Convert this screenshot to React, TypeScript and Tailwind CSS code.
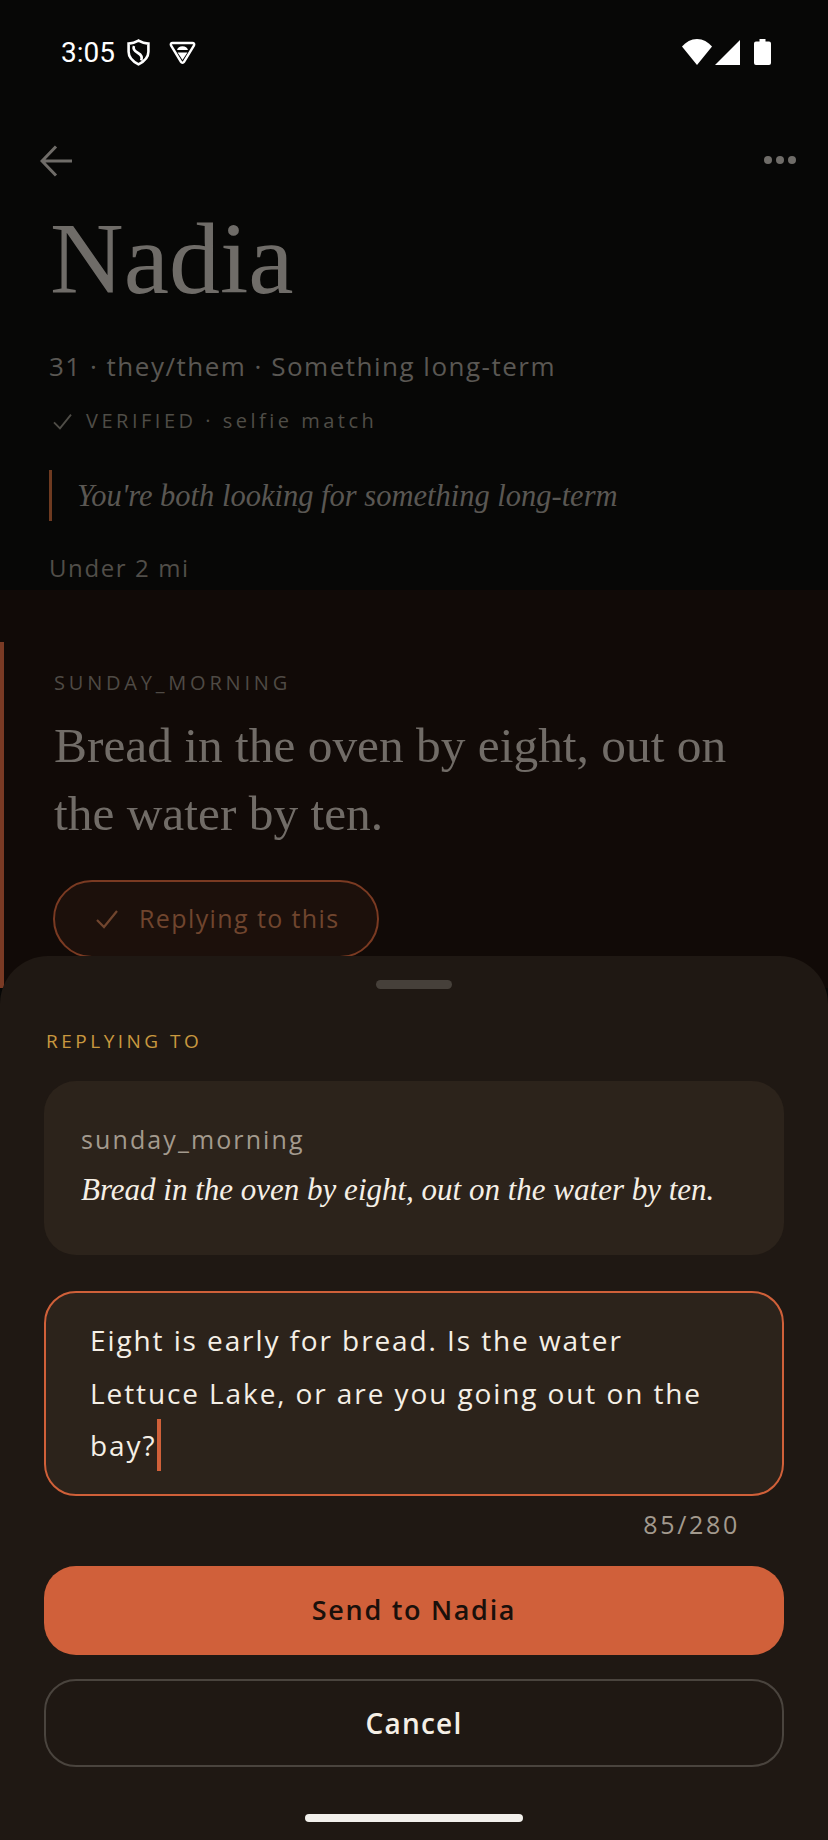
const sans = "font-['Open_Sans',sans-serif]";
const serif = "font-['Liberation_Serif',serif]";

function CheckMark({ className }: { className: string }) {
  return (
    <svg viewBox="0 0 24 20" fill="none" stroke="currentColor" strokeWidth="2.2" className={className}>
      <path d="M2 11l7 7L22 2" />
    </svg>
  );
}

function StatusBar() {
  return (
    <div className="flex h-[104px] items-center justify-between pl-[61px] pr-[57px] text-white">
      <div className="flex items-center">
        <span className="mt-[2px] font-['Roboto',sans-serif] text-[28px] leading-none">3:05</span>
        <svg viewBox="0 0 23 27" fill="none" stroke="currentColor" strokeWidth="2.6" className="ml-[12px] h-[27px] w-[23px]">
          <path d="M11.5 1.6C8 3.6 5 4.4 1.6 4.6v8.2c0 5.6 4 9.6 9.9 12.6 5.9-3 9.9-7 9.9-12.6V4.6C18 4.4 15 3.6 11.5 1.6z" />
          <path d="M7 7c-1.4 3 .4 5 4 7 3.2 1.8 4.6 4 3.2 7.4" />
        </svg>
        <svg viewBox="0 0 27 23" className="ml-[19px] h-[23px] w-[27px]">
          <path d="M3.5 2h20c1.4 0 2.1 1.2 1.5 2.4l-10 16.4c-.7 1.2-2.3 1.2-3 0L2 4.4C1.4 3.2 2.1 2 3.5 2z" fill="none" stroke="currentColor" strokeWidth="2.4" />
          <path d="M8 9c.6-2.4 2.6-3.8 5.5-3.8S18.400 6.600 19 9z" fill="currentColor" />
          <path d="M8.600 11.500h9.800l-4.900 7.600z" fill="currentColor" />
        </svg>
      </div>
      <div className="flex items-center">
        <svg viewBox="0 0 30 26" className="h-[26px] w-[30px]">
          <path d="M0 7.500C4 3 9 0 15 0s11 3 15 7.500L15 26z" fill="currentColor" />
        </svg>
        <svg viewBox="0 0 25 25" className="ml-[3px] h-[25px] w-[25px]">
          <path d="M25 0v25H0z" fill="currentColor" />
        </svg>
        <svg viewBox="0 0 17 26" className="ml-[14px] h-[26px] w-[17px]">
          <path d="M5.500 0h6v2.500H15a2 2 0 0 1 2 2V24a2 2 0 0 1-2 2H2a2 2 0 0 1-2-2V4.500a2 2 0 0 1 2-2h3.500z" fill="currentColor" />
        </svg>
      </div>
    </div>
  );
}

function ProfileHeader() {
  return (
    <div className="h-[486px] px-[49px]">
      <div className="-ml-[9px] -mr-[17px] flex h-[103px] items-start justify-between pt-[41px] text-[#6f6c68]">
        <svg viewBox="0 0 32 32" fill="none" stroke="currentColor" strokeWidth="3" className="h-[32px] w-[32px]">
          <path d="M32 16H3M16 1.500L2 16l14 14.500" />
        </svg>
        <div className="mt-[11px] flex gap-[4px]">
          <span className="h-[8px] w-[8px] rounded-full bg-[#6f6c68]" />
          <span className="h-[8px] w-[8px] rounded-full bg-[#6f6c68]" />
          <span className="h-[8px] w-[8px] rounded-full bg-[#6f6c68]" />
        </div>
      </div>
      <h1 className={`${serif} pl-[1px] text-[102px] leading-[104px] text-[#6f6c68]`}>Nadia</h1>
      <p className={`${sans} mt-[38px] text-[26px] leading-[34px] tracking-[1.5px] text-[#5a5753]`}>
        31 · they/them · Something long-term
      </p>
      <div className={`${sans} mt-[25px] flex items-center text-[20px] leading-[26px] tracking-[3.5px] text-[#4f4d47]`}>
        <CheckMark className="ml-[3px] h-[17px] w-[21px]" />
        <span className="ml-[13px]">VERIFIED · selfie match</span>
      </div>
      <div className="mt-[36px] flex h-[51px] items-center border-l-[3px] border-[#6e3a20] pl-[25px]">
        <p className={`${serif} text-[30.5px] italic leading-[40px] text-[#5a5753]`}>
          You're both looking for something long-term
        </p>
      </div>
      <p className={`${sans} mt-[31px] text-[24px] leading-[32px] tracking-[1.6px] text-[#514e49]`}>Under 2 mi</p>
    </div>
  );
}

function PromptCard() {
  return (
    <div className="bg-[#110a07] pt-[52px]">
      <div className="h-[346px] border-l-[4px] border-[#7a3a24] pl-[50px] pt-[28px]">
        <p className={`${sans} text-[20px] leading-[26px] tracking-[3.8px] text-[#4f4a45]`}>SUNDAY_MORNING</p>
        <p className={`${serif} mt-[16px] text-[49.4px] leading-[68px] text-[#716c67]`}>
          Bread in the oven by eight, out on
          <br />
          the water by ten.
        </p>
        <div className="-ml-[1px] mt-[32px] flex h-[78px] w-[326px] items-center rounded-full border-2 border-[#7a3a22] bg-[#1c100b] pl-[40px] text-[#70452e]">
          <CheckMark className="h-[20px] w-[24px]" />
          <span className={`${sans} ml-[20px] text-[25px] tracking-[1.4px]`}>Replying to this</span>
        </div>
      </div>
    </div>
  );
}

function ReplySheet() {
  return (
    <div className="absolute inset-x-0 bottom-0 h-[884px] rounded-t-[48px] bg-[#1f1813] px-[44px]">
      <div className="mx-auto mt-[24px] h-[9px] w-[76px] rounded-full bg-[#46403a]" />
      <p className={`${sans} mt-[39px] pl-[2px] text-[19px] leading-[26px] tracking-[3.5px] text-[#c9983f]`}>REPLYING TO</p>
      <div className="mt-[27px] h-[174px] rounded-[32px] bg-[#2c231b] pl-[37px] pt-[41px]">
        <p className={`${sans} text-[25px] leading-[34px] tracking-[2.1px] text-[#a39a8e]`}>sunday_morning</p>
        <p className={`${serif} mt-[14px] text-[31px] italic leading-[40px] text-[#f5efe6]`}>
          Bread in the oven by eight, out on the water by ten.
        </p>
      </div>
      <div className={`${sans} mt-[36px] h-[205px] rounded-[32px] border-2 border-[#d06039] bg-[#2c231b] pl-[44px] pt-[21px] text-[28px] leading-[52.5px] tracking-[1.9px] text-[#f5efe6]`}>
        Eight is early for bread. Is the water
        <br />
        Lettuce Lake, or are you going out on the
        <br />
        bay?
        <span className="ml-[1px] inline-block h-[52px] w-[4px] bg-[#d06039] align-[-15px]" />
      </div>
      <p className={`${sans} mt-[12px] pr-[44px] text-right text-[25px] leading-[32px] tracking-[2.7px] text-[#a39a8e]`}>85/280</p>
      <button className={`${sans} mt-[26px] block h-[89px] w-full rounded-[32px] bg-[#d0603a] text-[27px] font-semibold tracking-[1.7px] text-[#1a100b]`}>
        Send to Nadia
      </button>
      <button className={`${sans} mt-[24px] block h-[88px] w-full rounded-[32px] border-2 border-[#4a443e] text-[28px] font-semibold tracking-[1.2px] text-[#f5efe6]`}>
        Cancel
      </button>
      <div className="mx-auto mt-[47px] h-[8px] w-[218px] rounded-full bg-[#f2f0ec]" />
    </div>
  );
}

export default function App() {
  return (
    <div className="relative h-[1840px] w-[828px] overflow-hidden bg-[#070706]">
      <StatusBar />
      <ProfileHeader />
      <PromptCard />
      <ReplySheet />
    </div>
  );
}
